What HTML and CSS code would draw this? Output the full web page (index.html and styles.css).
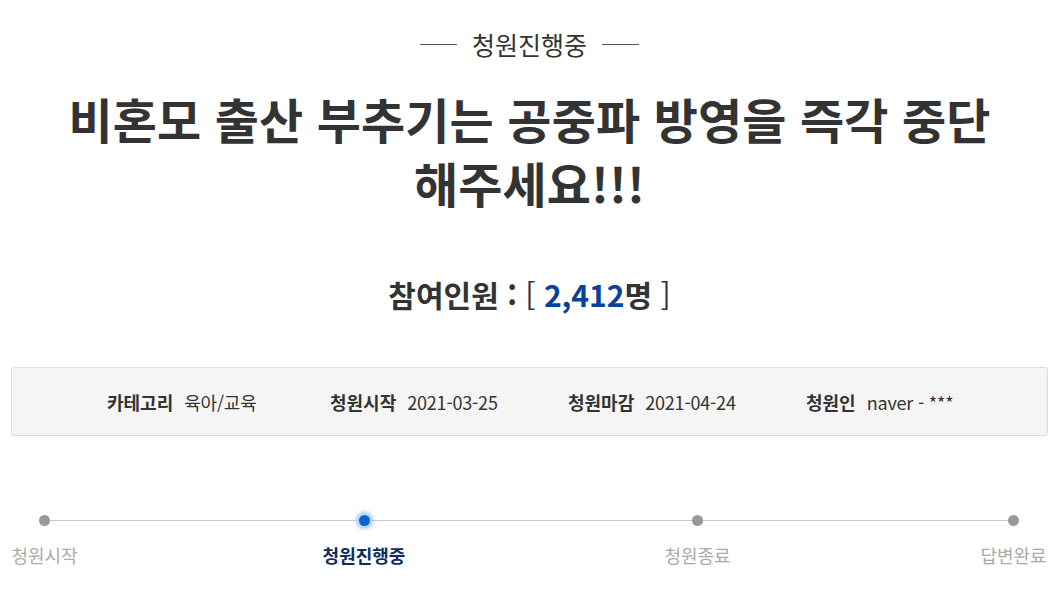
FILE: index.html
```html
<!DOCTYPE html>
<html lang="ko">
<head>
<meta charset="utf-8">
<link rel="stylesheet" href="styles.css">
</head>
<body>
<div class="page">
  <div class="status"><span class="rule"></span><span class="status-text">청원진행중</span><span class="rule"></span></div>
  <h1 class="title">비혼모 출산 부추기는 공중파 방영을 즉각 중단<br>해주세요!!!</h1>
  <div class="count">참여인원 : <span class="bracket">[</span> <span class="num">2,412</span>명 <span class="bracket">]</span></div>
  <ul class="info">
    <li><strong>카테고리</strong><span>육아/교육</span></li>
    <li><strong>청원시작</strong><span>2021-03-25</span></li>
    <li><strong>청원마감</strong><span>2021-04-24</span></li>
    <li><strong>청원인</strong><span>naver - ***</span></li>
  </ul>
  <div class="progress">
    <div class="track"></div>
    <ol class="steps">
      <li class="step"><span class="dot"></span><span class="label">청원시작</span></li>
      <li class="step active"><span class="dot"></span><span class="label">청원진행중</span></li>
      <li class="step"><span class="dot"></span><span class="label">청원종료</span></li>
      <li class="step"><span class="dot"></span><span class="label">답변완료</span></li>
    </ol>
  </div>
</div>
</body>
</html>
```

FILE: styles.css
```css
* { box-sizing: border-box; }
html, body { margin: 0; padding: 0; background: #fff; }
body {
  font-family: "Noto Sans CJK KR", "Noto Sans", sans-serif;
  color: #333;
}
.page {
  padding: 28px 12px 0 11px;
}
.status {
  display: flex;
  justify-content: center;
  align-items: center;
  gap: 15px;
  height: 32px;
}
.status-text {
  font-size: 25px;
  color: #333;
  line-height: 32px;
}
.rule {
  display: block;
  width: 37px;
  height: 1px;
  background: #555;
}
.title {
  margin: 26px 0 0;
  text-align: center;
  font-size: 48px;
  font-weight: 700;
  line-height: 64px;
  color: #333;
  letter-spacing: 0.1px;
}
.count {
  margin-top: 60px;
  text-align: center;
  font-size: 30px;
  font-weight: 700;
  line-height: 40px;
  color: #333;
}
.count .bracket { font-weight: 400; color: #333; }
.count .num { color: #0a4199; }
.info {
  list-style: none;
  margin: 53px 0 0;
  padding: 0 0 0 95px;
  height: 69px;
  display: flex;
  align-items: center;
  background: #f5f5f5;
  border: 1px solid #dcdcdc;
  border-radius: 3px;
  font-size: 18px;
}
.info li {
  display: flex;
  align-items: center;
  gap: 11px;
}
.info li:nth-child(1) { width: 223px; }
.info li:nth-child(2) { width: 238px; }
.info li:nth-child(3) { width: 238px; }
.info strong { font-weight: 700; color: #333; }
.info span { color: #333; letter-spacing: -0.2px; }
.progress {
  position: relative;
  margin-top: 79px;
}
.track {
  position: absolute;
  left: 33px;
  right: 35px;
  top: 5px;
  height: 1px;
  background: #c8c8c8;
}
.steps {
  list-style: none;
  margin: 0;
  padding: 0;
  display: flex;
  position: relative;
}
.step {
  display: flex;
  flex-direction: column;
  align-items: center;
  gap: 17px;
  white-space: nowrap;
}
.step:nth-child(1) { width: 67px; }
.step:nth-child(2) { width: 86px; margin-left: 243px; }
.step:nth-child(3) { width: 67px; margin-left: 257px; }
.step:nth-child(4) { width: 69px; margin-left: auto; }
.dot {
  width: 11px;
  height: 11px;
  border-radius: 50%;
  background: #999;
}
.label {
  font-size: 18px;
  line-height: 24px;
  color: #aaa;
}
.step.active .dot {
  background: #0a67d0;
  box-shadow: 0 0 0 2px #bcd8f7, 0 0 3px 4px rgba(140, 190, 245, 0.5);
}
.step.active .label {
  color: #0d2d5e;
  font-weight: 700;
}
```
